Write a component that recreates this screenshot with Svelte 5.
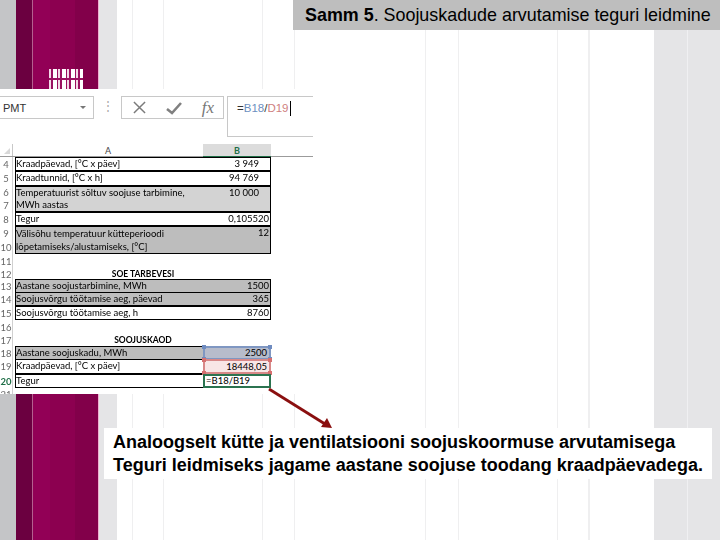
<script>
  const rows = [
    { nums: [4], h: 14, a: 'Kraadpäevad, [°C x päev]', b: '3 949', pad: 'pr', cls: 'plain' },
    { nums: [5], h: 15, a: 'Kraadtunnid, [°C x h]', b: '94 769', pad: 'pr', cls: 'plain' },
    { nums: [6, 7], h: 26, a: 'Temperatuurist sõltuv  soojuse tarbimine, MWh aastas', b: '10 000', pad: 'pr', cls: 'light wrap' },
    { nums: [8], h: 14, a: 'Tegur', b: '0,105520', cls: 'plain' },
    { nums: [9, 10], h: 28, a: 'Välisõhu temperatuur kütteperioodi lõpetamiseks/alustamiseks, [°C]', b: '12', cls: 'mid wrap' },
    { nums: [11], h: 14, cls: 'none' },
    { nums: [12], h: 11, a: 'SOE TARBEVESI', cls: 'none head' },
    { nums: [13], h: 13, a: 'Aastane soojustarbimine,  MWh', b: '1500', cls: 'mid' },
    { nums: [14], h: 14, a: 'Soojusvõrgu töötamise aeg, päevad', b: '365', cls: 'mid' },
    { nums: [15], h: 14, a: 'Soojusvõrgu töötamise aeg, h', b: '8760', cls: 'plain' },
    { nums: [16], h: 14, cls: 'none' },
    { nums: [17], h: 12, a: 'SOOJUSKAOD', cls: 'none head' },
    { nums: [18], h: 13, a: 'Aastane soojuskadu,  MWh', b: '2500', cls: 'mid', ref: 'blue' },
    { nums: [19], h: 15, a: 'Kraadpäevad, [°C x päev]', b: '18448,05', cls: 'plain', ref: 'red' },
    { nums: [20], h: 14, a: 'Tegur', b: '=B18/B19', cls: 'plain', ref: 'green' },
    { nums: [21], h: 6, cls: 'none' }
  ];
</script>

<div class="page">
  <div class="title"><b>Samm 5</b>. Soojuskadude arvutamise teguri leidmine</div>

  <div class="pattern"></div>

  <div class="shot">
    <div class="toolbar">
      <div class="namebox"><span>PMT</span><i class="drop"></i></div>
      <div class="dots">⋮</div>
      <div class="buttons">
        <svg width="13" height="13" viewBox="0 0 14 14"><path d="M1 1 L13 13 M13 1 L1 13" stroke="#7b7b7b" stroke-width="1.6" fill="none"/></svg>
        <svg width="16" height="14" viewBox="0 0 16 14"><path d="M1 8 L6 12 L15 2" stroke="#808080" stroke-width="2.6" fill="none"/></svg>
        <span class="fx">fx</span>
      </div>
      <div class="formula"><span class="eq">=</span><span class="blue">B18</span><span class="slash">/</span><span class="red">D19</span><i class="caret"></i></div>
    </div>
    <div class="colhead">
      <div class="corner"><i></i></div>
      <div class="col-a">A</div>
      <div class="col-b">B</div>
    </div>
    <div class="sheet">
      {#each rows as r}
        <div class="row {r.cls}" style="height:{r.h}px">
          <div class="nums">
            {#each r.nums as n}
              <span class:act={n === 20}>{n}</span>
            {/each}
          </div>
          <div class="a">{r.a ?? ''}</div>
          <div class="b {r.ref ?? ''} {r.pad ?? ''}">
            {r.b ?? ''}
            {#if r.ref}
              <i class="h tl"></i><i class="h tr"></i><i class="h bl"></i><i class="h br"></i>
            {/if}
          </div>
        </div>
      {/each}
    </div>
  </div>

  <svg class="arrow" width="720" height="540" viewBox="0 0 720 540">
    <line x1="269" y1="389" x2="325" y2="424" stroke="#8a0f0f" stroke-width="2.8"/>
    <polygon points="332,428 321,427 327,418" fill="#8a0f0f"/>
  </svg>

  <div class="note">Analoogselt kütte ja ventilatsiooni soojuskoormuse arvutamisega<br />Teguri leidmiseks jagame aastane soojuse toodang kraadpäevadega.</div>
</div>

<style>
  :global(body) { margin: 0; background: #fff; }
  .page {
    position: relative;
    width: 720px;
    height: 540px;
    overflow: hidden;
    font-family: "Liberation Sans", Arial, sans-serif;
    background: linear-gradient(90deg,
      #c4c5c7 0 16px, #6b0040 16px 32px, #b4608f 32px 33px,
      #920056 33px 50px, #8c0050 50px 75px, #82004a 75px 98px, #eeb0d0 98px 99px,
      #e5e5e7 99px 117px, #fff 117px 132px, #efeff0 132px 133px, #fff 133px 163px,
      #efeff0 163px 164px, #fff 164px 262px, #efeff0 262px 263px, #fff 263px 294px,
      #efeff0 294px 295px, #fff 295px 425px, #efeff0 425px 426px, #fff 426px 458px,
      #efeff0 458px 459px, #fff 459px 557px, #efeff0 557px 558px, #fff 558px 588px,
      #efeff0 588px 590px, #fff 590px 654px, #e5e5e7 654px 687px, #f0f0f2 687px 688px,
      #e5e5e7 688px 720px);
  }
  .title {
    position: absolute;
    left: 293px;
    top: 0;
    width: 427px;
    height: 30px;
    box-sizing: border-box;
    padding: 5px 0 0 12px;
    background: #bebebe;
    color: #000;
    font-size: 17.9px;
    line-height: 20px;
    white-space: nowrap;
  }
  .title b { font-weight: 700; }
  .pattern {
    position: absolute;
    left: 49px;
    top: 69px;
    width: 34px;
    height: 20px;
    background:
      linear-gradient(#0000 0 9px, #9a1060 9px 11px, #0000 11px),
      repeating-linear-gradient(90deg, #f3d9e6 0 2px, #9a1060 2px 4px, #fff 4px 8px, #9a1060 8px 9px);
  }
  .shot {
    position: absolute;
    left: 0;
    top: 89px;
    width: 313px;
    height: 305px;
    background: #fff;
    overflow: hidden;
  }
  .toolbar {
    display: flex;
    align-items: flex-start;
    height: 55px;
    padding-top: 7px;
    box-sizing: border-box;
  }
  .namebox {
    width: 94px;
    height: 23px;
    box-sizing: border-box;
    border: 1px solid #c8c8c8;
    border-left: 0;
    display: flex;
    align-items: center;
    justify-content: space-between;
    padding: 0 7px 0 3px;
    font-size: 11px;
    color: #333;
  }
  .drop {
    border: 3px solid transparent;
    border-top: 3px solid #777;
    border-bottom: 0;
  }
  .dots {
    width: 27px;
    text-align: center;
    color: #aaa;
    font-size: 12px;
    line-height: 20px;
  }
  .buttons {
    width: 103px;
    height: 23px;
    box-sizing: border-box;
    border: 1px solid #c8c8c8;
    display: flex;
    align-items: center;
    justify-content: space-between;
    padding: 0 9px 0 11px;
  }
  .fx {
    font-family: "Liberation Serif", serif;
    font-style: italic;
    font-size: 17px;
    color: #777;
    line-height: 20px;
  }
  .formula {
    margin-left: 3px;
    flex: 1;
    height: 41px;
    box-sizing: border-box;
    border: 1px solid #c8c8c8;
    border-right: 0;
    padding: 4px 0 0 9px;
    font-size: 11.5px;
    line-height: 14px;
    color: #333;
    display: flex;
    align-items: flex-start;
  }
  .formula .blue { color: #6d8fc0; }
  .formula .red { color: #cf7f7f; }
  .slash { color: #333; }
  .caret { width: 1px; height: 15px; background: #000; margin-left: 1px; }
  .colhead {
    display: flex;
    height: 13px;
    border-bottom: 1px solid #9b9b9b;
    box-sizing: border-box;
    font-family: Lato, sans-serif;
    font-size: 9px;
    line-height: 13px;
    color: #444;
  }
  .corner { width: 13px; border-right: 1px solid #c8c8c8; box-sizing: border-box; position: relative; }
  .corner i {
    position: absolute;
    right: 2px;
    bottom: 2px;
    border-left: 6px solid transparent;
    border-bottom: 6px solid #d8d8d8;
  }
  .col-a { width: 190px; text-align: center; }
  .col-b {
    width: 68px;
    text-align: center;
    background: #dcdcdc;
    color: #1e6e46;
    font-weight: 700;
    border-bottom: 1px solid #1e6e46;
    height: 13px;
    box-sizing: border-box;
  }
  .sheet {
    width: 272px;
    font-family: Lato, "Open Sans", sans-serif;
    font-size: 9.5px;
    color: #000;
    filter: blur(0.4px);
  }
  .row {
    display: grid;
    grid-template-columns: 15px 188px 68px;
    box-sizing: border-box;
  }
  .nums {
    display: flex;
    flex-direction: column;
    justify-content: space-around;
    align-items: center;
    border-right: 1px solid #d0d0d0;
    margin-right: 2px;
    color: #666;
    font-size: 9.5px;
    line-height: 13px;
    overflow: hidden;
  }
  .nums .act { color: #1e6e46; font-weight: 700; }
  .a, .b {
    box-sizing: border-box;
    border-top: 1px solid #000;
    border-bottom: 1px solid #000;
    line-height: 12px;
    overflow: hidden;
    white-space: nowrap;
    padding: 0 1px 0 0;
  }
  .a { border-left: 1px solid #000; }
  .b {
    position: relative;
    text-align: right;
    border-right: 1px solid #000;
    overflow: visible;
  }
  .b.pr { padding-right: 11px; }
  .wrap .a { white-space: normal; line-height: 12px; padding-right: 3px; }
  .mid.wrap .a { line-height: 13px; }
  .wrap .b { line-height: 12px; }
  .light .a, .light .b { background: #d3d3d3; }
  .mid .a, .mid .b { background: #bdbdbd; }
  .none .a, .none .b { border-color: transparent; background: none; }
  .head .a { text-align: center; font-weight: 700; font-size: 8.5px; grid-column: 2 / 4; line-height: 10px; }
  .head .b { display: none; }

  .b.blue, .b.red, .b.green { border-width: 2px; border-style: solid; padding-right: 2px; line-height: 10px; }
  .b.blue { background: #b7bccb; border-color: #7f97c2; }
  .b.red { background: #f8e6e6; border-color: #d88888; line-height: 11px; }
  .b.green { background: #fff; border-color: #2b7350; text-align: left; padding-left: 1px; }
  .h { position: absolute; width: 4px; height: 4px; }
  .tl { left: -3px; top: -3px; }
  .tr { right: -3px; top: -3px; }
  .bl { left: -3px; bottom: -3px; }
  .br { right: -3px; bottom: -3px; }
  .blue .h { background: #6f8cc0; }
  .red .h { background: #d66f6f; }
  .green .h { display: none; }

  .arrow { position: absolute; left: 0; top: 0; pointer-events: none; }
  .note {
    position: absolute;
    left: 104px;
    top: 428px;
    width: 608px;
    height: 51px;
    box-sizing: border-box;
    padding: 3px 0 0 9px;
    background: #fff;
    color: #000;
    font-size: 18px;
    line-height: 23px;
    font-weight: 700;
    white-space: nowrap;
  }
</style>
